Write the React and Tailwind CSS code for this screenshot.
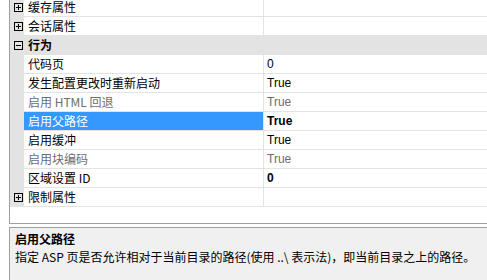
import React from 'react';

const rows = [
  { type: 'cat', name: '缓存属性', open: false },
  { type: 'cat', name: '会话属性', open: false },
  { type: 'group', name: '行为', open: true },
  { name: '代码页', value: '0' },
  { name: '发生配置更改时重新启动', value: 'True' },
  { name: '启用 HTML 回退', value: 'True', disabled: true },
  { name: '启用父路径', value: 'True', bold: true, selected: true },
  { name: '启用缓冲', value: 'True' },
  { name: '启用块编码', value: 'True', disabled: true },
  { name: '区域设置 ID', value: '0', bold: true },
  { type: 'cat', name: '限制属性', open: false },
];

function Expander({ open }) {
  return (
    <svg width="9" height="9" viewBox="0 0 9 9" className="block">
      <rect x="0.5" y="0.5" width="8" height="8" fill="none" stroke="#000" />
      <line x1="2" y1="4.5" x2="7" y2="4.5" stroke="#000" />
      {!open && <line x1="4.5" y1="2" x2="4.5" y2="7" stroke="#000" />}
    </svg>
  );
}

const cjk = { fontFamily: '"Noto Sans CJK SC", "Microsoft YaHei", sans-serif' };
const latin = { fontFamily: '"Liberation Sans", Arial, sans-serif' };

function Row({ row }) {
  if (row.type === 'group') {
    return (
      <div className="flex h-[19px] bg-[#e3e3e3]">
        <div className="w-[14px] flex items-center justify-center pl-[2px] pb-[1px]">
          <Expander open={row.open} />
        </div>
        <div className="flex-1 pl-[4px] text-[12px] leading-[18px] font-bold text-black" style={cjk}>
          {row.name}
        </div>
      </div>
    );
  }
  if (row.type === 'cat') {
    return (
      <div className="flex h-[19px]">
        <div className="w-[14px] bg-[#e3e3e3] flex items-center justify-center pl-[2px] pb-[1px]">
          <Expander open={row.open} />
        </div>
        <div className="flex flex-1 border-b border-[#e3e3e3]">
          <div className="w-[240px] border-r border-[#e3e3e3] pl-[4px] text-[12px] leading-[18px] text-black" style={cjk}>
            {row.name}
          </div>
          <div className="flex-1" />
        </div>
      </div>
    );
  }
  return (
    <div className="flex h-[19px]">
      <div className="w-[14px] bg-[#e3e3e3]" />
      <div className="flex flex-1 border-b border-[#e3e3e3]">
        <div
          className={
            'w-[240px] border-r border-[#e3e3e3] pl-[4px] text-[12px] leading-[18px] ' +
            (row.selected ? 'bg-[#3399ff] text-white' : row.disabled ? 'text-[#6d6d6d]' : 'text-black')
          }
          style={cjk}
        >
          {row.name}
        </div>
        <div
          className={
            'flex-1 pl-[3px] text-[12px] leading-[18px] ' +
            (row.bold ? 'font-bold ' : '') +
            (row.disabled ? 'text-[#6d6d6d]' : 'text-black')
          }
          style={latin}
        >
          {row.value}
        </div>
      </div>
    </div>
  );
}

export default function App() {
  return (
    <div className="w-[487px] h-[280px] bg-white overflow-hidden">
      <div className="ml-[9px] -mt-[2px] h-[226px] border-l border-b border-[#a0a0a0] bg-white">
        {rows.map((r, i) => (
          <Row key={i} row={r} />
        ))}
      </div>
      <div className="ml-[9px] mt-[3px] h-[60px] border-l border-t border-[#a0a0a0] bg-[#f0f0f0] pl-[5px] pt-[2px]">
        <div className="text-[12px] leading-[18px] font-bold text-black" style={cjk}>
          启用父路径
        </div>
        <div className="text-[12px] leading-[18px] text-black whitespace-nowrap" style={cjk}>
          指定 ASP 页是否允许相对于当前目录的路径(使用 ..\ 表示法)，即当前目录之上的路径。
        </div>
      </div>
    </div>
  );
}
